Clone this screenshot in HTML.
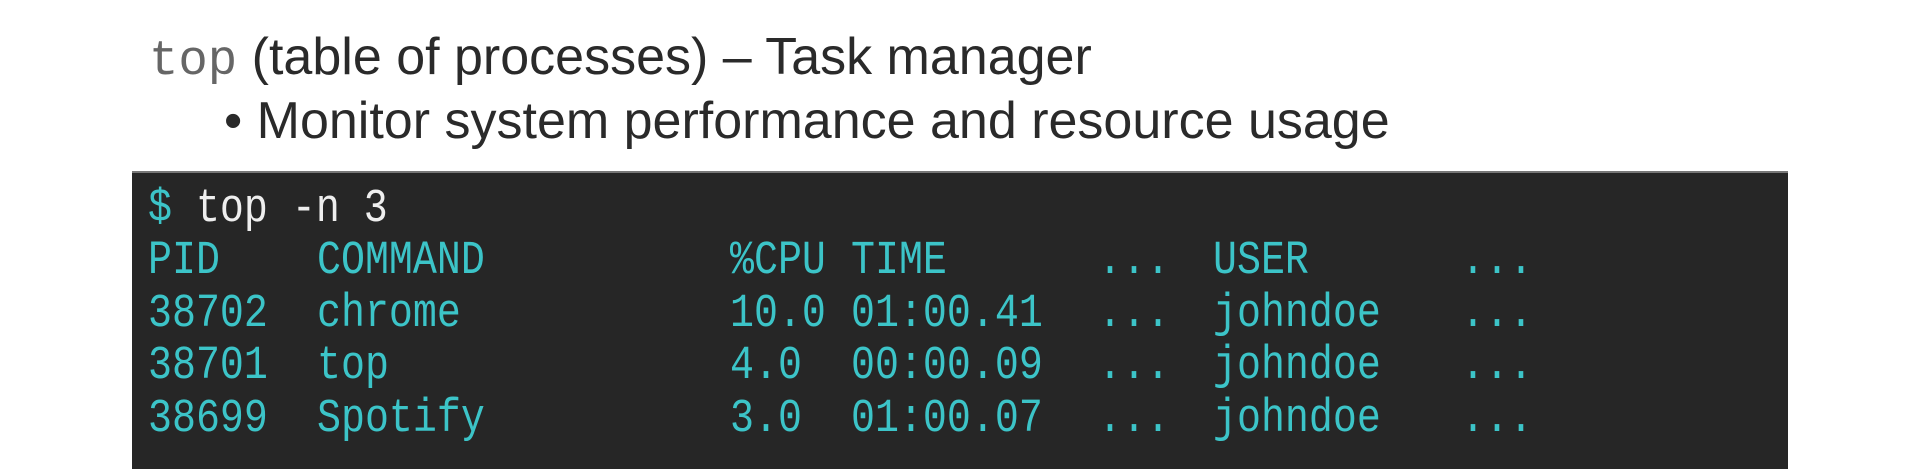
<!DOCTYPE html>
<html><head><meta charset="utf-8"><style>
html,body{margin:0;padding:0;width:1920px;height:469px;background:#fff;overflow:hidden;position:relative}
.t{position:absolute;white-space:pre;font-family:"Liberation Sans",sans-serif;color:#2a2a2a;font-size:52px;line-height:1}
.mono{font-family:"Liberation Mono",monospace;color:#666;font-size:49px}
#term{position:absolute;left:132px;top:171px;width:1656px;height:298px;background:#262626;border-top:2px solid #777}
.l{position:absolute;white-space:pre;font-family:"Liberation Mono",monospace;font-size:47px;line-height:52.6px;color:#3cc4c8;transform:scaleX(0.85);transform-origin:0 0}
</style></head><body>
<div class="t" style="left:149px;top:31px"><span class="mono">top</span> (table of processes) – Task manager</div>
<div class="t" style="left:224px;top:95px">• Monitor system performance and resource usage</div>
<div id="term"></div>
<div class="l" style="left:148px;top:184px">$ <span style="color:#eee">top -n 3</span></div>
<div class="l" style="left:148px;top:236px">PID<br>38702<br>38701<br>38699</div>
<div class="l" style="left:317px;top:236px">COMMAND<br>chrome<br>top<br>Spotify</div>
<div class="l" style="left:730px;top:236px">%CPU<br>10.0<br>4.0<br>3.0</div>
<div class="l" style="left:851px;top:236px">TIME<br>01:00.41<br>00:00.09<br>01:00.07</div>
<div class="l" style="left:1098px;top:236px">...<br>...<br>...<br>...</div>
<div class="l" style="left:1213px;top:236px">USER<br>johndoe<br>johndoe<br>johndoe</div>
<div class="l" style="left:1461px;top:236px">...<br>...<br>...<br>...</div>
</body></html>
